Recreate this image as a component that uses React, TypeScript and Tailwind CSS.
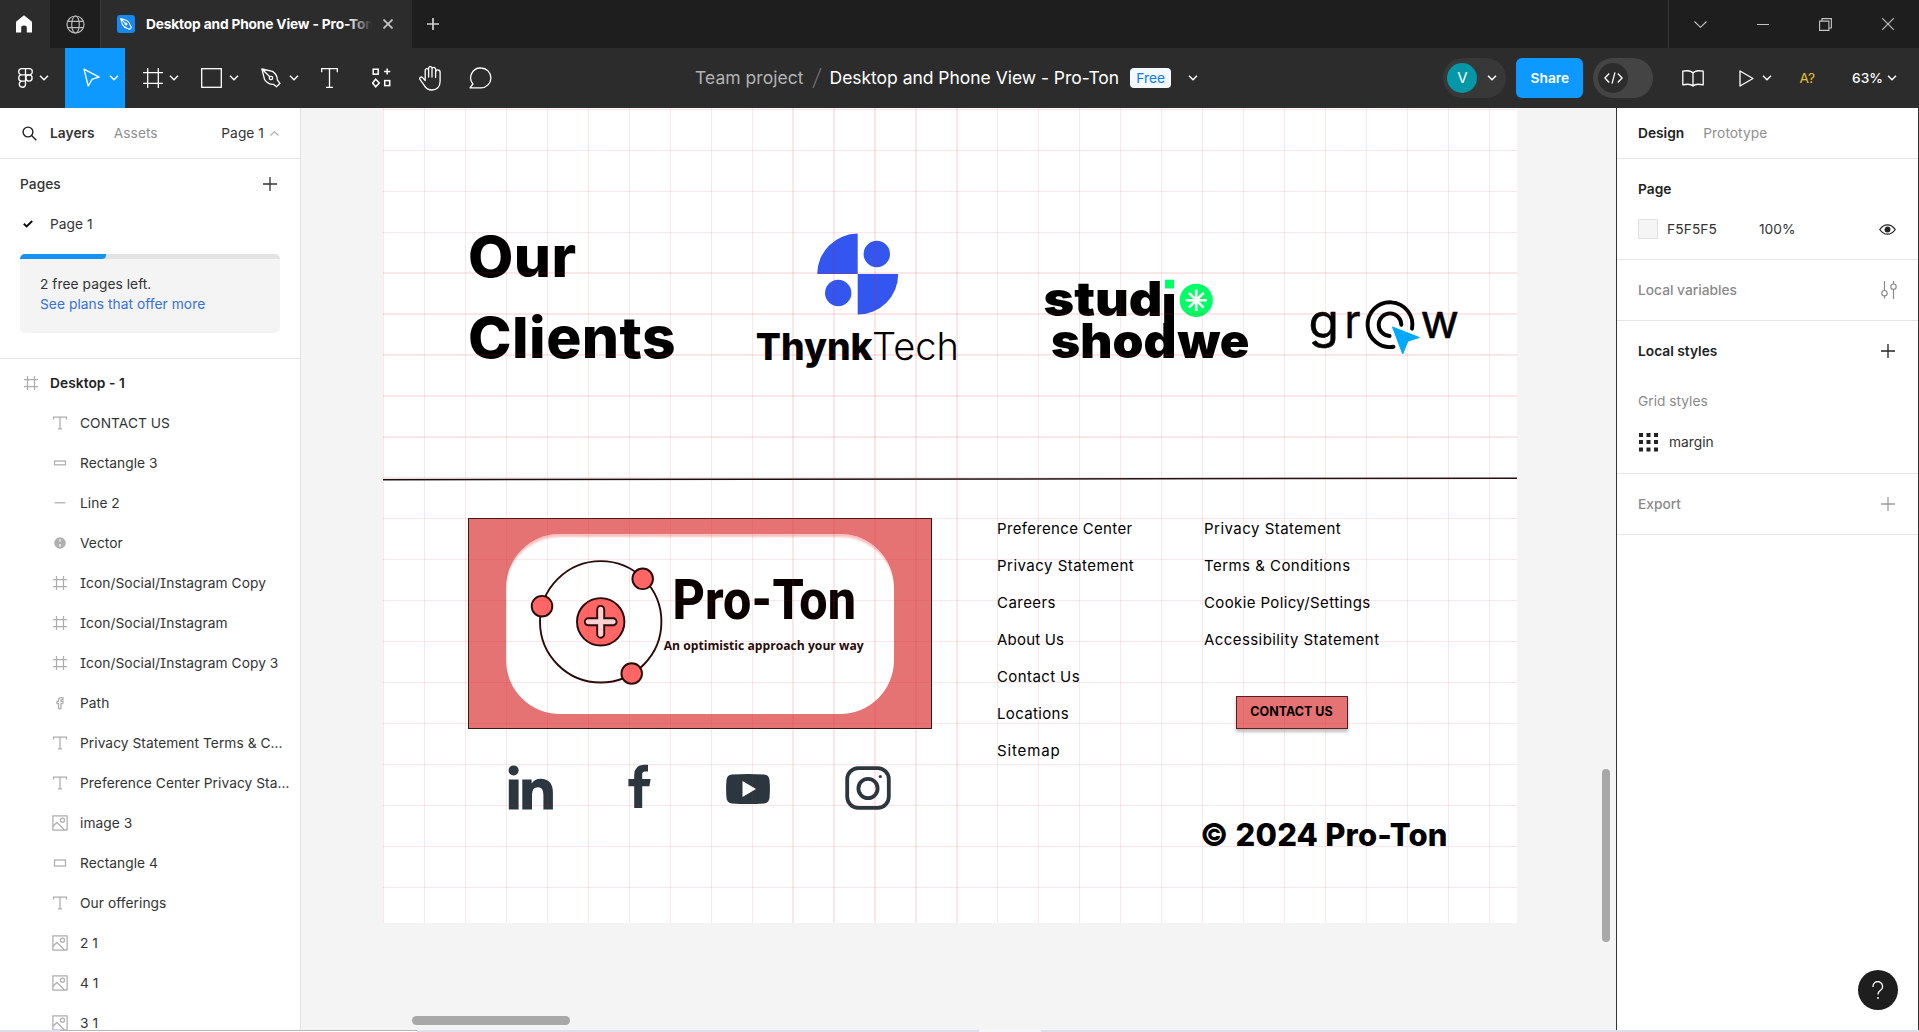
import React from "react";

const stroke = { fill: "none", stroke: "currentColor" } as const;

function Chevron({ className = "" }: { className?: string }) {
  return (
    <svg className={`h-[6px] w-[10px] shrink-0 ${className}`} viewBox="0 0 10 6" {...stroke} strokeWidth={1.5}>
      <path d="M1 0.8 L5 4.8 L9 0.8" />
    </svg>
  );
}

function Plus({ size = 14, width = 1.3, className = "" }: { size?: number; width?: number; className?: string }) {
  return (
    <svg width={size} height={size} viewBox="0 0 14 14" className={`shrink-0 ${className}`} {...stroke} strokeWidth={width}>
      <path d="M7 0V14M0 7H14" />
    </svg>
  );
}

/* ---------- title bar ---------- */

function TitleBar() {
  return (
    <div className="flex h-12 w-full bg-[#1e1e1e] text-white">
      <div className="flex h-full w-[50px] items-center justify-center bg-[#2c2c2c] pr-[2px]">
        <svg width="16" height="18" viewBox="0 0 16 18" fill="#fff">
          <path d="M8 0.2 L15.4 6.3 Q16 6.8 16 7.6 V17.5 H10.8 V12.6 Q10.8 10.6 8 10.6 Q5.2 10.6 5.2 12.6 V17.5 H0 V7.6 Q0 6.8 0.6 6.3 Z" />
        </svg>
      </div>
      <div className="flex h-full w-[50px] items-center justify-center text-[#b8b8b8]">
        <svg width="19" height="19" viewBox="0 0 19 19" {...stroke} strokeWidth={1.2}>
          <circle cx="9.5" cy="9.5" r="8.5" />
          <ellipse cx="9.5" cy="9.5" rx="3.8" ry="8.5" />
          <path d="M1.7 6.3H17.3M1.7 12.7H17.3" />
        </svg>
      </div>
      <div className="flex h-full w-[312px] items-center border-l border-[#383838] bg-[#2c2c2c] pl-4">
        <div className="flex h-[18px] w-[18px] items-center justify-center rounded-[3px] bg-[#1589ee]">
          <svg width="12" height="12" viewBox="0 0 20 20" {...stroke} strokeWidth={1.8} strokeLinejoin="round">
            <path d="M1 1 L11 4 Q16 7 17 12 L19 16 L16 19 L12 17 Q7 16 4 11 Z M1 1 L9 9" />
            <circle cx="10" cy="10" r="1.6" />
          </svg>
        </div>
        <div className="relative ml-[11px] w-[226px] overflow-hidden whitespace-nowrap text-[13.75px] font-bold tracking-[-0.17px]">
          Desktop and Phone View - Pro-Ton
          <div className="absolute right-0 top-0 h-full w-6 bg-gradient-to-r from-transparent to-[#2c2c2c]" />
        </div>
        <svg className="ml-[11px]" width="10" height="10" viewBox="0 0 10 10" fill="none" stroke="#c8c8c8" strokeWidth={1.7}>
          <path d="M0.5 0.5L9.5 9.5M9.5 0.5L0.5 9.5" />
        </svg>
      </div>
      <div className="flex items-center pl-[15px] text-[#d0d0d0]">
        <Plus size={12} width={2} />
      </div>
      <div className="ml-auto flex h-full w-[251px] items-center border-l border-[#383838] text-[#c4c4c4]">
        <div className="flex w-[63px] justify-center">
          <svg width="13" height="7" viewBox="0 0 13 7" {...stroke} strokeWidth={1.1}><path d="M0.5 0.5L6.5 6.3L12.5 0.5" /></svg>
        </div>
        <div className="flex w-[63px] justify-center"><div className="h-px w-3 bg-[#c4c4c4]" /></div>
        <div className="flex w-[62px] justify-center">
          <svg width="13" height="13" viewBox="0 0 13 13" {...stroke} strokeWidth={1.1}>
            <path d="M0.6 3.1H9.9V12.4H0.6Z M3 3V0.6H12.4V10H10" />
          </svg>
        </div>
        <div className="flex w-[63px] justify-center">
          <svg width="12" height="12" viewBox="0 0 12 12" {...stroke} strokeWidth={1.1}><path d="M0.3 0.3L11.7 11.7M11.7 0.3L0.3 11.7" /></svg>
        </div>
      </div>
    </div>
  );
}

/* ---------- toolbar ---------- */

function Toolbar() {
  return (
    <div className="flex h-[60px] w-full items-center bg-[#2c2c2c] text-white">
      <div className="flex w-[695px] shrink-0 items-center">
        <div className="flex h-[60px] w-[65px] items-center justify-between pl-[18px] pr-4">
          <svg width="15" height="20" viewBox="0 0 15 20" {...stroke} strokeWidth={1.3}>
            <path d="M7.5 0.7H3.8a3.1 3.1 0 0 0 0 6.2H7.5ZM7.5 0.7H11.2a3.1 3.1 0 0 1 0 6.2H7.5ZM7.5 6.9H3.8a3.1 3.1 0 0 0 0 6.2H7.5ZM7.5 13.1H3.8a3.1 3.1 0 1 0 3.7 3.1Z" />
            <circle cx="11" cy="10" r="3.1" />
          </svg>
          <Chevron />
        </div>
        <div className="flex h-[60px] w-[60px] items-center justify-between bg-[#0d99ff] pl-[18px] pr-[6px]">
          <svg width="18" height="20" viewBox="0 0 18 20" {...stroke} strokeWidth={1.3} strokeLinejoin="round">
            <path d="M1 1.2 L16.2 9.2 L9.2 11.2 L5.2 18 Z" />
          </svg>
          <Chevron />
        </div>
        <div className="flex h-[60px] w-[60px] items-center justify-between pl-[18px] pr-[6px]">
          <svg width="20" height="20" viewBox="0 0 20 20" {...stroke} strokeWidth={1.3}>
            <path d="M4.7 0V20M15.3 0V20M0 4.7H20M0 15.3H20" />
          </svg>
          <Chevron />
        </div>
        <div className="flex h-[60px] w-[60px] items-center justify-between pl-4 pr-[6px]">
          <svg width="21" height="20" viewBox="0 0 21 20" {...stroke} strokeWidth={1.3}>
            <rect x="0.7" y="0.7" width="19.6" height="18.6" />
          </svg>
          <Chevron />
        </div>
        <div className="flex h-[60px] w-[60px] items-center justify-between pl-4 pr-[6px]">
          <svg width="20" height="20" viewBox="0 0 20 20" {...stroke} strokeWidth={1.3} strokeLinejoin="round">
            <path d="M0.9 1 L11.5 3.4 Q16.5 7 16.4 12.2 L19 15.3 L15.5 18.8 L12.4 16.3 Q7 16.5 3.6 11.6 Z M0.9 1 L8.8 8.8" />
            <circle cx="10" cy="10" r="1.7" />
          </svg>
          <Chevron />
        </div>
        <div className="flex h-[60px] w-[50px] items-center justify-center pr-[2px]">
          <svg width="17" height="20" viewBox="0 0 17 20" {...stroke} strokeWidth={1.3}>
            <path d="M0.7 4.2V0.7H16.3V4.2M8.5 0.7V19.3M5 19.3H12" />
          </svg>
        </div>
        <div className="flex h-[60px] w-[50px] items-center justify-center pl-[2px]">
          <svg width="19" height="20" viewBox="0 0 19 20" {...stroke} strokeWidth={1.5}>
            <rect x="1.2" y="1.2" width="5" height="5" />
            <rect x="12.7" y="12.6" width="5" height="5" />
            <path d="M15.2 0.4V6.6M12.1 3.5H18.3M3.7 11.2L7.3 15L3.7 18.8L0.6 15Z" />
          </svg>
        </div>
        <div className="flex h-[60px] w-[50px] items-center justify-center">
          <svg width="22" height="25" viewBox="0 0 22 25" {...stroke} strokeWidth={1.3} strokeLinejoin="round" strokeLinecap="round">
            <path d="M6.2 14.6V4.3a1.6 1.6 0 0 1 3.4 0V11M9.6 4V2.3a1.7 1.7 0 0 1 3.4 0V11M13 3.2a1.7 1.7 0 0 1 3.6 0V11.5M16.6 6.2a1.9 1.9 0 0 1 4.5 0V15.6c0 5.2-3.3 8.4-8.2 8.4-4 0-6-1.7-7.5-4.4L1 13.4c-1-1.8 1.2-3.2 2.6-1.8L6.2 14.6" />
          </svg>
        </div>
        <div className="flex h-[60px] w-[50px] items-center justify-center">
          <svg width="23" height="22" viewBox="0 0 23 22" {...stroke} strokeWidth={1.3} strokeLinejoin="round">
            <path d="M12 1a9.7 9.7 0 1 1 0 19.8H1L3.9 17A9.8 9.8 0 0 1 12 1Z" />
          </svg>
        </div>
      </div>

      <div className="flex shrink-0 items-center whitespace-nowrap text-[17.5px]">
        <span className="text-[#b3b3b3] tracking-[0.04px]">Team project</span>
        <svg className="mx-[8px]" width="10" height="22" viewBox="0 0 10 22" fill="none" stroke="#6f6f6f" strokeWidth={1.3}><path d="M9 1L1 21" /></svg>
        <span className="tracking-[-0.03px]">Desktop and Phone View - Pro-Ton</span>
        <span className="ml-[11px] flex h-5 w-[41px] items-center justify-center rounded-[4px] bg-[#f3f9ff] text-[13.75px] text-[#0d7ce9]">Free</span>
        <Chevron className="ml-[17px]" />
      </div>

      <div className="flex flex-1 items-center justify-end">
        <div className="flex h-10 w-[63px] items-center rounded-full bg-[#383838] pl-[4px]">
          <div className="flex h-[30px] w-[30px] items-center justify-center rounded-full bg-[#0497a7] text-[15px]">V</div>
          <Chevron className="ml-[10px]" />
        </div>
        <div className="ml-[10px] flex h-10 w-[67px] items-center justify-center rounded-[6px] bg-[#0d99ff] text-[13.75px] font-semibold">Share</div>
        <div className="ml-[10px] flex h-10 w-[60px] items-center rounded-full bg-[#444] pl-[5px]">
          <div className="flex h-[30px] w-[30px] items-center justify-center rounded-full bg-[#2c2c2c]">
            <svg width="19" height="12" viewBox="0 0 19 12" {...stroke} strokeWidth={1.3}>
              <path d="M5.2 1.5L0.9 6L5.2 10.5M13.8 1.5L18.1 6L13.8 10.5M11 0.3L8 11.7" />
            </svg>
          </div>
        </div>
        <svg className="ml-[29px]" width="22" height="17" viewBox="0 0 22 17" {...stroke} strokeWidth={1.3} strokeLinejoin="round">
          <path d="M11 3C9.5 1 5 0.4 0.8 1.2V14.8C5 14 9.5 14.3 11 16C12.5 14.3 17 14 21.2 14.8V1.2C17 0.4 12.5 1 11 3ZM11 3V16" />
        </svg>
        <svg className="ml-[35px]" width="15" height="17" viewBox="0 0 15 17" {...stroke} strokeWidth={1.3} strokeLinejoin="round">
          <path d="M1 1L14 8.5L1 16Z" />
        </svg>
        <Chevron className="ml-[8px]" />
        <span className="ml-[27px] text-[13.75px] text-[#e8c02e]">A?</span>
        <span className="ml-[37px] text-[13.75px] font-medium">63%</span>
        <Chevron className="ml-[4px] mr-[22px]" />
      </div>
    </div>
  );
}

/* ---------- left panel ---------- */

type Kind = "frame" | "text" | "rect" | "rectBig" | "line" | "vector" | "path" | "image";

const layers: { kind: Kind; name: string }[] = [
  { kind: "text", name: "CONTACT US" },
  { kind: "rect", name: "Rectangle 3" },
  { kind: "line", name: "Line 2" },
  { kind: "vector", name: "Vector" },
  { kind: "frame", name: "Icon/Social/Instagram Copy" },
  { kind: "frame", name: "Icon/Social/Instagram" },
  { kind: "frame", name: "Icon/Social/Instagram Copy 3" },
  { kind: "path", name: "Path" },
  { kind: "text", name: "Privacy Statement Terms & C..." },
  { kind: "text", name: "Preference Center Privacy Sta..." },
  { kind: "image", name: "image 3" },
  { kind: "rectBig", name: "Rectangle 4" },
  { kind: "text", name: "Our offerings" },
  { kind: "image", name: "2 1" },
  { kind: "image", name: "4 1" },
  { kind: "image", name: "3 1" },
];

function LayerIcon({ kind }: { kind: Kind }) {
  return (
    <svg width="16" height="16" viewBox="0 0 16 16" fill="none" stroke="#adadad" strokeWidth={1.25} className="shrink-0">
      {kind === "frame" && <path d="M4.5 1V15M11.5 1V15M1 4.5H15M1 11.5H15" />}
      {kind === "text" && <path d="M1.5 4.5V2H14.5V4.5M8 2V13.8M6 13.8H10" />}
      {kind === "rect" && <rect x="2.5" y="6" width="11" height="3.8" />}
      {kind === "rectBig" && <rect x="2.5" y="5" width="11" height="6" />}
      {kind === "line" && <path d="M2.5 7.8H13.5" />}
      {kind === "vector" && (
        <>
          <circle cx="8" cy="8" r="5.8" fill="#b0b0b0" stroke="none" />
          <path d="M8 4.2V6.6M8 9V11.6" stroke="#fff" />
        </>
      )}
      {kind === "path" && <path d="M6.6 13.5V8.6H5V6.4H6.6V5Q6.6 2.5 9 2.5H11V4.6H9.6Q9 4.6 9 5.4V6.4H11L10.7 8.6H9V13.5Z" />}
      {kind === "image" && (
        <>
          <rect x="0.9" y="0.9" width="14.2" height="14.2" />
          <circle cx="10.5" cy="5.2" r="2" />
          <path d="M1 11.2L5 7.4L12.5 15" />
        </>
      )}
    </svg>
  );
}

function LeftPanel() {
  return (
    <div className="flex h-full w-[301px] shrink-0 flex-col overflow-hidden border-r border-[#e0e0e0] bg-white text-[13.75px] tracking-[0.05px] text-[#333] [font-feature-settings:'cv08']">
      <div className="flex h-[51px] shrink-0 items-center border-b border-[#e5e5e5]">
        <svg className="ml-[22px]" width="15" height="15" viewBox="0 0 15 15" fill="none" stroke="#222" strokeWidth={1.4}>
          <circle cx="6" cy="6" r="4.9" />
          <path d="M9.6 9.6L14.3 14.3" />
        </svg>
        <span className="ml-[13px] font-semibold">Layers</span>
        <span className="ml-[19px] text-[#8f8f8f]">Assets</span>
        <span className="ml-auto">Page 1</span>
        <svg className="ml-[6px] mr-[21px]" width="9" height="5" viewBox="0 0 9 5" fill="none" stroke="#aaa" strokeWidth={1.1}><path d="M0.5 4.5L4.5 0.7L8.5 4.5" /></svg>
      </div>
      <div className="flex h-[50px] shrink-0 items-center justify-between pl-5 pr-[23px] font-medium">
        <span className="font-[550]">Pages</span>
        <Plus />
      </div>
      <div className="flex h-[30px] shrink-0 items-center">
        <svg className="ml-[23px] w-[10px]" height="8" viewBox="0 0 10 8" fill="none" stroke="#111" strokeWidth={2}><path d="M0.8 3.8L3.6 6.4L9.2 1" /></svg>
        <span className="ml-[17px]">Page 1</span>
      </div>
      <div className="mx-5 mt-[15px] h-[79px] shrink-0 overflow-hidden rounded-[5px] bg-[#f4f4f4]">
        <div className="h-[5px] bg-[#e3e3e3]"><div className="h-full w-[86px] rounded-br-[4px] bg-[#1592f5]" /></div>
        <div className="pl-5 pt-[15px] leading-5">
          <div>2 free pages left.</div>
          <div className="text-[#3671d9]">See plans that offer more</div>
        </div>
      </div>
      <div className="mt-[25px] shrink-0 border-t border-[#e5e5e5] pt-1">
        <div className="flex h-10 items-center pl-[23px] font-semibold text-[#222]">
          <LayerIcon kind="frame" />
          <span className="ml-[11px]">Desktop - 1</span>
        </div>
        {layers.map((l, i) => (
          <div key={i} className="flex h-10 items-center whitespace-nowrap pl-[52px]">
            <LayerIcon kind={l.kind} />
            <span className="ml-3">{l.name}</span>
          </div>
        ))}
      </div>
    </div>
  );
}

/* ---------- artboard ---------- */

const columns = Array.from({ length: 28 }, (_, i) => ({
  at: i >= 10 && i <= 14 ? Math.floor(i * 40.95) : Math.floor(0.6 + i * 40.95),
  size: i >= 10 && i <= 14 ? 2 : 1,
}));
const rows = Array.from({ length: 20 }, (_, i) => ({
  at: i >= 4 && i <= 9 ? Math.floor(0.5 + i * 40.95) : Math.floor(1.3 + i * 40.95),
  size: i >= 4 && i <= 9 ? 2 : 1,
}));

function GridOverlay() {
  return (
    <svg className="pointer-events-none absolute left-0 top-0" width="1134" height="815" fill="#e8232f" fillOpacity={0.11} shapeRendering="crispEdges">
      {columns.map((c) => <rect key={`c${c.at}`} x={c.at} y={0} width={c.size} height={815} />)}
      {rows.map((r) => <rect key={`r${r.at}`} x={0} y={r.at} width={1134} height={r.size} />)}
    </svg>
  );
}

function ThynkTech() {
  return (
    <svg className="absolute left-[367px] top-[122px] overflow-visible" width="215" height="145" viewBox="750 230 215 145" fontSize="37.5">
      <g fill="#3355f0">
        <path d="M857.7 274V233.6A40.5 40.5 0 0 0 817.2 274Z" />
        <path d="M857.7 274V314.6A40.5 40.5 0 0 0 898.2 274Z" />
        <circle cx="876.8" cy="254" r="13.2" />
        <circle cx="838.2" cy="293" r="13.2" />
      </g>
      <text x="755.7" y="359.6" fontWeight="800" textLength="117" lengthAdjust="spacingAndGlyphs">Thynk</text>
      <text x="872" y="359.6" fontWeight="350" textLength="87" lengthAdjust="spacingAndGlyphs">Tech</text>
    </svg>
  );
}

function StudioShodwe() {
  return (
    <svg className="absolute left-[657px] top-[167px] overflow-visible" width="215" height="90" viewBox="1040 275 215 90" fontSize="47.5" fontWeight="900">
      <text x="1043.5" y="315.8" textLength="119" lengthAdjust="spacingAndGlyphs">stud</text>
      <text x="1051" y="357.7" textLength="124.5" lengthAdjust="spacingAndGlyphs">shod</text>
      <text x="1177.5" y="357.7" textLength="72" lengthAdjust="spacingAndGlyphs">we</text>
      <rect x="1164.2" y="294" width="9.8" height="63.7" />
      <rect x="1165" y="279.7" width="9" height="8.8" fill="#00ff66" />
      <circle cx="1196.2" cy="300.3" r="16.6" fill="#00ff66" />
      <path d="M1196.2 289.6V311M1185.5 300.3H1206.9M1188.8 292.9L1203.6 307.7M1203.6 292.9L1188.8 307.7" stroke="#fff" strokeWidth={2.6} />
    </svg>
  );
}

function Grow() {
  return (
    <svg className="absolute left-[922px] top-[187px] overflow-visible" width="160" height="70" viewBox="1305 295 160 70" fontSize="47">
      <g stroke="#000" strokeWidth={0.5} strokeLinejoin="round">
        <text x="1308.5" y="338.4" textLength="30.5" lengthAdjust="spacingAndGlyphs">g</text>
        <text x="1344.5" y="338.4" textLength="16" lengthAdjust="spacingAndGlyphs">r</text>
        <text x="1420.5" y="338.4" textLength="38.5" lengthAdjust="spacingAndGlyphs">w</text>
      </g>
      <g fill="none" stroke="#000" strokeWidth={3.9} strokeLinecap="round">
        <path d="M1412 328.7A22.4 22.4 0 1 0 1393.5 346.8" />
        <path d="M1401.3 324.7A11.3 11.3 0 1 0 1389.6 336" />
      </g>
      <path d="M1392.5 327L1419.3 337.5L1407.8 341.2L1402.7 354Z" fill="#00aaff" stroke="#00aaff" strokeLinejoin="round" />
    </svg>
  );
}

function ProTonCard() {
  return (
    <div className="absolute left-[85px] top-[410px] flex h-[211px] w-[464px] items-center justify-center border border-[#3a1818] bg-[#e57373]">
      <div className="h-[180px] w-[388px] rounded-[54px] bg-white shadow-[inset_0_4px_2px_-1px_rgba(255,120,120,0.45)]">
        <svg width="388" height="180" viewBox="506 533.5 388 180">
          <g fill="#ff6666" stroke="#2a0a0a" strokeWidth={1.9}>
            <circle cx="600.7" cy="621.3" r="60.7" fill="none" />
            <circle cx="600.7" cy="621.3" r="23.7" />
            <circle cx="642.7" cy="578.3" r="10.3" />
            <circle cx="542" cy="605.7" r="10.3" />
            <circle cx="631.7" cy="673" r="10.3" />
            <path
              d="M597.2 608.9a3.5 3.5 0 0 1 7 0V617.8H613.1a3.5 3.5 0 0 1 0 7H604.2V633.7a3.5 3.5 0 0 1-7 0V624.8H588.3a3.5 3.5 0 0 1 0-7H597.2Z"
              fill="#ffd2d2"
            />
          </g>
          <text x="672.5" y="618" fontFamily="Roboto" fontSize="55" fontWeight="800" fill="#0a0000" textLength="183.5" lengthAdjust="spacingAndGlyphs">Pro-Ton</text>
          <text x="663.7" y="649" fontFamily="Open Sans" fontSize="12.8" fontWeight="700" fill="#2a0a0a" textLength="200" lengthAdjust="spacingAndGlyphs">An optimistic approach your way</text>
        </svg>
      </div>
    </div>
  );
}

function Socials() {
  return (
    <div className="absolute left-[125px] top-[656px] flex h-[46px] w-[383px] items-center text-[#2b363f]">
      <svg width="45" height="45" viewBox="0 0 45 45" fill="currentColor">
        <circle cx="5.6" cy="5.4" r="5" />
        <path d="M0.8 14.5H10.6V44.6H0.8Z M14.3 14.5H23.6V18.6Q26.6 13.8 32.5 13.8Q44.9 13.8 44.9 28V44.6H35.4V29.6Q35.4 22.3 30 22.3Q24 22.3 24 29.6V44.6H14.3Z" />
      </svg>
      <svg className="-mt-[2px] ml-[75px]" width="23" height="45" viewBox="0 0 23 45" fill="currentColor">
        <path d="M6.2 44V22.3H0.4V15H6.2V11.4Q6.2 0.7 16 0.7H20V7.4H17Q14.2 7.4 14.2 10.6V15H22.6L21.4 22.3H14.2V44Z" />
      </svg>
      <svg className="ml-[75px] mt-1" width="44" height="30" viewBox="0 0 44 30">
        <path d="M6 0.6Q22 -0.4 38 0.6Q43 1 43.5 6Q44.3 15 43.5 24Q43 29 38 29.4Q22 30.4 6 29.4Q1 29 0.5 24Q-0.3 15 0.5 6Q1 1 6 0.6Z" fill="currentColor" />
        <path d="M16.5 7L30 15L16.5 23Z" fill="#fff" />
      </svg>
      <svg className="ml-[75px] mt-px" width="46" height="44" viewBox="0 0 46 44" {...stroke}>
        <rect x="2.2" y="2.2" width="41.6" height="39.6" rx="11" strokeWidth={3.8} />
        <circle cx="23" cy="22.5" r="9.6" strokeWidth={3.8} />
        <circle cx="35.3" cy="10.5" r="1.6" fill="currentColor" stroke="none" />
      </svg>
    </div>
  );
}

const linksA = [
  ["Preference Center", "tracking-[0.33px]"],
  ["Privacy Statement", "tracking-[0.48px]"],
  ["Careers", "tracking-[0.45px]"],
  ["About Us", "tracking-[0.2px]"],
  ["Contact Us", "tracking-[0.4px]"],
  ["Locations", "tracking-[0.33px]"],
  ["Sitemap", "tracking-[0.85px]"],
];
const linksB = [
  ["Privacy Statement", "tracking-[0.48px]"],
  ["Terms & Conditions", "tracking-[0.46px]"],
  ["Cookie Policy/Settings", "tracking-[0.38px]"],
  ["Accessibility Statement", "tracking-[0.42px]"],
];

function Links({ items, className }: { items: string[][]; className: string }) {
  return (
    <div className={`absolute whitespace-nowrap text-[15px] leading-[37px] text-black ${className}`}>
      {items.map(([t, tracking]) => <div key={t}><span className={tracking}>{t}</span></div>)}
    </div>
  );
}

function Canvas() {
  return (
    <div className="relative h-full flex-1 overflow-hidden bg-[#f4f4f4]">
      <div className="absolute left-[82px] top-0 h-[815px] w-[1134px] bg-white text-black">
        <h1 className="absolute left-[85px] top-[108px] origin-left scale-x-[1.03] whitespace-nowrap text-[57px] font-extrabold leading-[81px]">
          <div><span className="tracking-[0.4px]">Our</span></div>
          <div><span className="tracking-[0.4px]">Clients</span></div>
        </h1>
        <ThynkTech />
        <StudioShodwe />
        <Grow />
        <svg className="absolute left-0 top-[368px]" width="1134" height="6" viewBox="0 0 1134 6" stroke="#111" strokeWidth={1.5}>
          <path d="M0 3.8L1134 2.2" />
        </svg>
        <ProTonCard />
        <Socials />
        <Links items={linksA} className="left-[614px] top-[402px]" />
        <Links items={linksB} className="left-[821px] top-[402px]" />
        <div className="absolute left-[853px] top-[588px] flex h-[33px] w-[112px] items-center justify-center whitespace-nowrap border border-[#5a2020] bg-[#e57373] pr-px text-[12.5px] font-bold shadow-[0_3px_3px_rgba(0,0,0,0.25)]">
          CONTACT US
        </div>
        <div className="absolute left-[817px] top-[707px] whitespace-nowrap text-[31px] font-extrabold leading-[40px] tracking-[0.2px]">© 2024 Pro-Ton</div>
        <GridOverlay />
      </div>
      <div className="absolute bottom-[5px] left-[111px] h-[9px] w-[158px] rounded-full bg-[#a8a8a8]" />
      <div className="absolute right-[6px] top-[661px] h-[173px] w-[8px] rounded-full bg-[#a8a8a8]" />
    </div>
  );
}

/* ---------- right panel ---------- */

function RightPanel() {
  return (
    <div className="relative flex h-full w-[303px] shrink-0 flex-col border-l border-r border-[#333] bg-white text-[13.75px] text-[#333]">
      <div className="flex h-[51px] items-center border-b border-[#e5e5e5] pl-[21px]">
        <span className="font-semibold text-[#222]">Design</span>
        <span className="ml-[19px] tracking-[0.06px] text-[#8f8f8f]">Prototype</span>
      </div>
      <div className="flex h-[101px] flex-col border-b border-[#e5e5e5] pl-[21px] pr-[22px] pt-[20px]">
        <div className="h-5 font-semibold leading-5 text-[#222]">Page</div>
        <div className="mt-5 flex h-5 items-center">
          <div className="h-5 w-5 border border-[#e0e0e0] bg-[#f5f5f5]" />
          <span className="ml-[9px] w-[92px] tracking-[0.1px]">F5F5F5</span>
          <span>100%</span>
          <svg className="ml-auto" width="17" height="11" viewBox="0 0 17 11" fill="none" stroke="#222" strokeWidth={1.3}>
            <path d="M0.8 5.5Q4 0.8 8.5 0.8T16.2 5.5Q13 10.2 8.5 10.2T0.8 5.5Z" />
            <circle cx="8.5" cy="5.5" r="2.3" fill="#222" />
          </svg>
        </div>
      </div>
      <div className="flex h-[61px] items-center justify-between border-b border-[#e5e5e5] pl-[21px] pr-[21px] font-medium text-[#8a8a8a]">
        Local variables
        <svg width="16" height="18" viewBox="0 0 16 18" fill="none" stroke="#8a8a8a" strokeWidth={1.2}>
          <path d="M3.5 0V9.4M3.5 15V17.5M12.5 0V3M12.5 8.4V18" />
          <circle cx="3.5" cy="12.2" r="2.7" />
          <circle cx="12.5" cy="5.7" r="2.7" />
        </svg>
      </div>
      <div className="flex h-[153px] flex-col border-b border-[#e5e5e5] pl-[21px] pr-[23px] pt-5">
        <div className="flex h-5 items-center justify-between font-semibold text-[#222]">Local styles<Plus /></div>
        <div className="mt-[30px] h-5 leading-5 text-[#8a8a8a]">Grid styles</div>
        <div className="mt-[21px] flex h-5 items-center">
          <svg width="20" height="20" viewBox="0 0 20 20" fill="#222">
            {[1, 8, 15.5].map((y) => [1, 8.5, 16].map((x) => <rect key={`${x}-${y}`} x={x} y={y} width="4" height="4" />))}
          </svg>
          <span className="ml-[11px]">margin</span>
        </div>
      </div>
      <div className="flex h-[61px] items-center justify-between border-b border-[#e5e5e5] pl-[21px] pr-[23px] font-medium text-[#8a8a8a]">
        Export
        <Plus className="text-[#9a9a9a]" />
      </div>
      <div className="absolute bottom-5 right-5 flex h-10 w-10 items-center justify-center rounded-full bg-[#1e1e1e] text-white">
        <svg width="12" height="19" viewBox="0 0 12 19" {...stroke} strokeWidth={1.3}>
          <path d="M1 6V5.5a4.8 4.8 0 1 1 7.5 3.8Q6 11 6 13.5" />
          <circle cx="6" cy="17" r="0.9" fill="#fff" stroke="none" />
        </svg>
      </div>
    </div>
  );
}

export default function App() {
  return (
    <div className="flex h-[1032px] w-[1919px] flex-col overflow-hidden bg-white font-['Inter',sans-serif]">
      <TitleBar />
      <Toolbar />
      <div className="flex h-[922px] w-full">
        <LeftPanel />
        <Canvas />
        <RightPanel />
      </div>
      <div className="flex h-[2px] w-full bg-[#dedeec]">
        <div className="h-full w-[60px]" />
        <div className="h-full w-[357px] border-t border-[#b5b5b5] bg-white" />
        <div className="h-full w-[562px]" />
        <div className="h-full w-[62px] bg-[#f4f4fa]" />
      </div>
    </div>
  );
}
